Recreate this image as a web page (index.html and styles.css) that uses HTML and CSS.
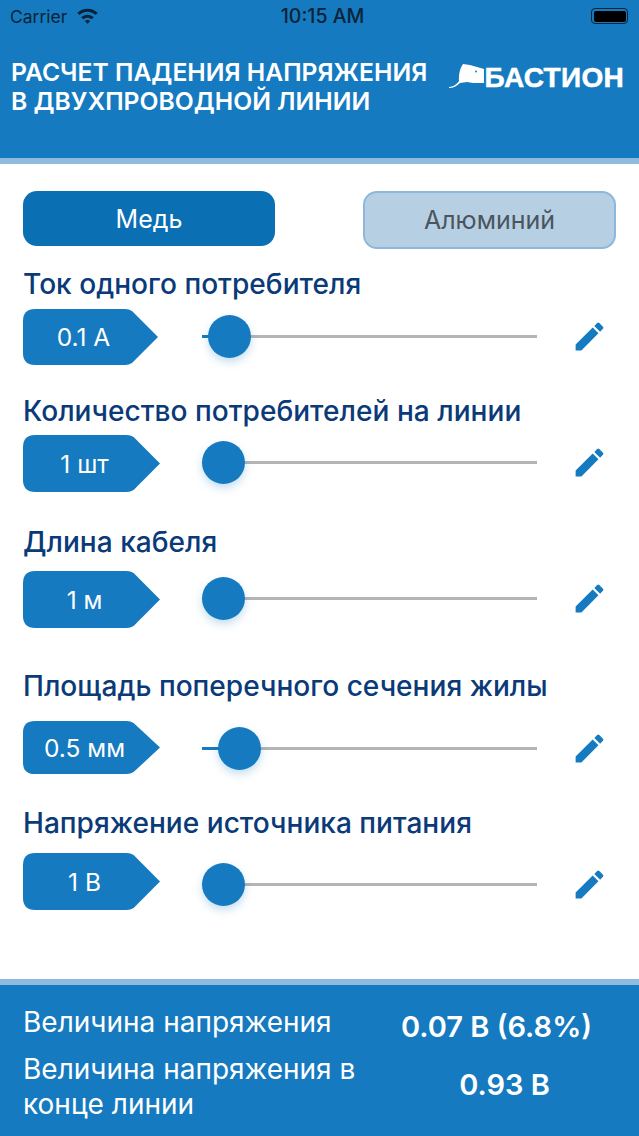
FILE: index.html
```html
<!DOCTYPE html>
<html lang="ru">
<head>
<meta charset="utf-8">
<title>Расчет падения напряжения</title>
<link rel="stylesheet" href="styles.css">
</head>
<body>
<div class="page">
  <header class="header">
    <div class="status">
      <div class="status-left">
        <span>Carrier</span>
        <svg class="wifi" viewBox="0 0 20 15"><path d="M10 .500C6.200.500 2.800 2 .2 4.500l2 2.100C4.300 4.600 7 3.400 10 3.400s5.700 1.200 7.800 3.200l2-2.100C17.200 2 13.800.500 10 .500zM10 6.200c-2.300 0-4.400.9-6 2.400l2.100 2.100c1-1 2.400-1.600 3.900-1.600s2.900.6 3.900 1.600L16 8.600c-1.600-1.500-3.700-2.400-6-2.400zM10 11.200c-1 0-1.800.4-2.500 1l2.500 2.600 2.500-2.600c-.7-.6-1.500-1-2.500-1z"/></svg>
      </div>
      <span class="status-time">10:15 AM</span>
      <div class="status-right">
        <span class="battery"><span class="battery-fill"></span></span>
      </div>
    </div>
    <div class="brand">
      <h1 class="app-title">РАСЧЕТ ПАДЕНИЯ НАПРЯЖЕНИЯ<br>В ДВУХПРОВОДНОЙ ЛИНИИ</h1>
      <div class="logo">
        <svg class="ray" viewBox="0 0 36 27"><path d="M14 2 L21 3 L35 7 V21 L24 21 L18 20 L11 21 C8 24 4 26 0 26 V25 C4 25 8 22 10 19 C9.500 13 11 6 14 2Z"/><circle class="ray-eye" cx="27" cy="9.500" r="1"/></svg>
        <span class="logo-text">БАСТИОН</span>
      </div>
    </div>
  </header>
  <div class="band"></div>

  <main class="main">
    <div class="segments">
      <button class="seg seg-on">Медь</button>
      <button class="seg seg-off">Алюминий</button>
    </div>

    <section class="field f1">
      <h2 class="label">Ток одного потребителя</h2>
      <div class="row">
        <div class="tag t1"><svg class="tag-bg" viewBox="0 0 135 56" preserveAspectRatio="none"><path d="M12 0H102Q106 0 109 2L135 28L109 54Q106 56 102 56H12Q0 56 0 44V12Q0 0 12 0Z"/></svg><span class="tag-text">0.1 А</span></div>
        <div class="track"><div class="filled" style="width:27px"></div><div class="thumb" style="left:27px"></div></div>
        <svg class="pen" viewBox="0 0 24 24"><path d="M3 17.250V21h3.750L17.810 9.940l-3.750-3.750L3 17.250zM20.710 7.040a1 1 0 0 0 0-1.410l-2.340-2.340a1 1 0 0 0-1.410 0l-1.830 1.830 3.750 3.750 1.830-1.830z"/></svg>
      </div>
    </section>

    <section class="field f2">
      <h2 class="label">Количество потребителей на линии</h2>
      <div class="row">
        <div class="tag t2"><svg class="tag-bg" viewBox="0 0 135 56" preserveAspectRatio="none"><path d="M12 0H102Q106 0 109 2L135 28L109 54Q106 56 102 56H12Q0 56 0 44V12Q0 0 12 0Z"/></svg><span class="tag-text">1 шт</span></div>
        <div class="track"><div class="thumb" style="left:21px"></div></div>
        <svg class="pen" viewBox="0 0 24 24"><path d="M3 17.250V21h3.750L17.810 9.940l-3.750-3.750L3 17.250zM20.710 7.040a1 1 0 0 0 0-1.410l-2.340-2.340a1 1 0 0 0-1.410 0l-1.830 1.830 3.750 3.750 1.830-1.830z"/></svg>
      </div>
    </section>

    <section class="field f3">
      <h2 class="label">Длина кабеля</h2>
      <div class="row">
        <div class="tag t2"><svg class="tag-bg" viewBox="0 0 135 56" preserveAspectRatio="none"><path d="M12 0H102Q106 0 109 2L135 28L109 54Q106 56 102 56H12Q0 56 0 44V12Q0 0 12 0Z"/></svg><span class="tag-text">1 м</span></div>
        <div class="track"><div class="thumb" style="left:21px"></div></div>
        <svg class="pen" viewBox="0 0 24 24"><path d="M3 17.250V21h3.750L17.810 9.940l-3.750-3.750L3 17.250zM20.710 7.040a1 1 0 0 0 0-1.410l-2.340-2.340a1 1 0 0 0-1.410 0l-1.830 1.830 3.750 3.750 1.830-1.830z"/></svg>
      </div>
    </section>

    <section class="field f4">
      <h2 class="label">Площадь поперечного сечения жилы</h2>
      <div class="row">
        <div class="tag t3"><svg class="tag-bg" viewBox="0 0 135 56" preserveAspectRatio="none"><path d="M12 0H102Q106 0 109 2L135 28L109 54Q106 56 102 56H12Q0 56 0 44V12Q0 0 12 0Z"/></svg><span class="tag-text">0.5 мм</span></div>
        <div class="track"><div class="filled" style="width:37px"></div><div class="thumb" style="left:37px"></div></div>
        <svg class="pen" viewBox="0 0 24 24"><path d="M3 17.250V21h3.750L17.810 9.940l-3.750-3.750L3 17.250zM20.710 7.040a1 1 0 0 0 0-1.410l-2.340-2.340a1 1 0 0 0-1.410 0l-1.830 1.830 3.750 3.750 1.830-1.830z"/></svg>
      </div>
    </section>

    <section class="field f5">
      <h2 class="label">Напряжение источника питания</h2>
      <div class="row">
        <div class="tag t2"><svg class="tag-bg" viewBox="0 0 135 56" preserveAspectRatio="none"><path d="M12 0H102Q106 0 109 2L135 28L109 54Q106 56 102 56H12Q0 56 0 44V12Q0 0 12 0Z"/></svg><span class="tag-text">1 В</span></div>
        <div class="track"><div class="thumb" style="left:21px"></div></div>
        <svg class="pen" viewBox="0 0 24 24"><path d="M3 17.250V21h3.750L17.810 9.940l-3.750-3.750L3 17.250zM20.710 7.040a1 1 0 0 0 0-1.410l-2.340-2.340a1 1 0 0 0-1.410 0l-1.830 1.830 3.750 3.750 1.830-1.830z"/></svg>
      </div>
    </section>
  </main>

  <div class="band"></div>
  <footer class="footer">
    <div class="result r1">
      <span class="res-label">Величина напряжения</span>
      <strong class="res-value">0.07 В (6.8%)</strong>
    </div>
    <div class="result r2">
      <span class="res-label">Величина напряжения в конце линии</span>
      <strong class="res-value">0.93 В</strong>
    </div>
  </footer>
</div>
</body>
</html>
```

FILE: styles.css
```css
* { box-sizing: border-box; }
html, body { margin: 0; padding: 0; }
body { font-family: Inter, "Noto Sans", "Liberation Sans", sans-serif; background: #fff; }
.page { width: 639px; height: 1136px; display: flex; flex-direction: column; overflow: hidden; }

.header { height: 158px; background: #157abf; display: flex; flex-direction: column; }
.band { height: 6px; background: #8fbbdf; flex: none; }

.status { display: grid; grid-template-columns: 1fr auto 1fr; align-items: center; height: 32px; padding: 0 10px; color: #0a2338; font-size: 17.500px; }
.status-left { display: flex; align-items: center; gap: 10px; }
.wifi { width: 21px; height: 16px; fill: #0a2338; }
.status-time { font-weight: 500; font-size: 19.500px; padding-left: 6px; }
.status-right { display: flex; justify-content: flex-end; }
.battery { width: 37px; height: 16px; border: 1px solid #0a2338; border-radius: 4px; padding: 1.500px; display: flex; margin-right: 1px; }
.battery-fill { flex: 1; background: #000; border-radius: 2px; }

.brand { display: flex; justify-content: space-between; align-items: flex-start; padding: 26px 15px 0 11px; }
.app-title { margin: 0; color: #fff; font-size: 24.700px; line-height: 29px; font-weight: 600; white-space: nowrap; }
.logo { display: flex; align-items: flex-start; margin-top: 4px; }
.ray { width: 36px; height: 27px; fill: #fff; flex: none; }
.ray-eye { fill: #157abf; }
.logo-text { color: #fff; font-family: "Liberation Sans", sans-serif; font-weight: 700; font-size: 28px; line-height: 30px; letter-spacing: .3px; -webkit-text-stroke: .5px #fff; margin-top: 1px; }

.main { flex: 1; padding: 27px 23px 0; }
.segments { display: flex; justify-content: space-between; align-items: flex-start; }
.seg { font: inherit; font-size: 25px; border-radius: 14px; padding: 0; }
.seg-on { width: 252px; height: 55px; background: #0b6fb3; color: #fff; border: 0; }
.seg-off { width: 253px; height: 58px; background: #b7cfe2; color: #4a5560; border: 2px solid #8db8db; }

.label { margin: 0; font-size: 28.100px; line-height: 30px; font-weight: 500; color: #0a3a78; white-space: nowrap; }
.f1 { margin-top: 20px; }
.f2 { margin-top: 31px; }
.f3 { margin-top: 35px; }
.f4 { margin-top: 43px; }
.f5 { margin-top: 34px; }
.f1 .label { margin-bottom: 10px; }
.f2 .label { margin-bottom: 9px; }
.f3 .label { margin-bottom: 14px; }
.f4 .label { margin-bottom: 20px; }
.f5 .label { margin-bottom: 15px; }

.row { display: flex; align-items: center; }
.tag { display: grid; flex: none; align-items: center; justify-items: center; color: #fff; font-size: 24.500px; }
.tag-bg, .tag-text { grid-area: 1 / 1; }
.tag-bg { fill: #157abf; width: 100%; height: 100%; }
.tag-text { position: relative; padding-right: 14px; }
.t1 { width: 135px; height: 56px; }
.t2 { width: 137px; height: 57px; }
.t3 { width: 137px; height: 53px; }
.t1 + .track { margin-left: 44px; }
.t2 + .track, .t3 + .track { margin-left: 42px; }

.track { position: relative; flex: none; width: 335px; height: 3px; background: #b5b5b5; }
.filled { position: absolute; left: 0; top: 0; height: 100%; background: #157abf; }
.thumb { position: absolute; top: 50%; width: 43px; height: 43px; margin: -21.500px 0 0 -21.500px; border-radius: 50%; background: #157abf; box-shadow: 0 4px 8px rgba(21,122,191,.25); }
.pen { width: 37px; height: 37px; flex: none; margin-left: 34px; fill: #157abf; }
.f1 .track, .f1 .pen { margin-bottom: 2px; }
.f2 .track, .f2 .pen { margin-bottom: 3px; }
.f3 .track, .f3 .pen { margin-bottom: 2px; }
.f4 .track, .f4 .pen { margin-top: 2px; }
.f5 .track, .f5 .pen { margin-top: 6px; }

.footer { height: 151px; background: #157abf; color: #fff; padding: 20px 0 0 23px; }
.result { display: flex; align-items: center; }
.r1 { height: 44px; }
.r2 { height: 70px; margin-top: 2px; }
.res-label { width: 340px; font-size: 28px; line-height: 35px; flex: none; }
.res-value { flex: 1; text-align: center; font-size: 29px; font-weight: 600; }
.r1 .res-label { margin-bottom: 10px; }
.r1 .res-value { margin-right: 9px; margin-bottom: 2px; }
.r2 .res-label { margin-top: 2px; }
.r2 .res-value { margin-left: 7px; margin-bottom: 4px; }
```
